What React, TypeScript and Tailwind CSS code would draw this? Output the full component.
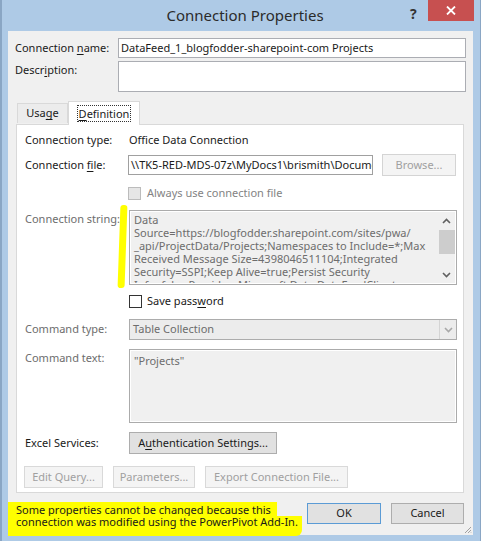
import React from 'react';

function U({ children }: { children: React.ReactNode }) {
  return <span className="underline underline-offset-[2px]">{children}</span>;
}

function Checkbox({ disabled }: { disabled?: boolean }) {
  return (
    <span
      className={
        disabled
          ? 'block w-[13px] h-[13px] border border-[#bcbcbc] bg-[#e6e6e6]'
          : 'block w-[13px] h-[13px] border border-[#333333] bg-white'
      }
    />
  );
}

function Chevron({ up, color = '#606060' }: { up?: boolean; color?: string }) {
  return (
    <svg width="9" height="6" viewBox="0 0 9 6">
      <path
        d={up ? 'M1 5 L4.5 1.5 L8 5' : 'M1 1 L4.5 4.5 L8 1'}
        fill="none"
        stroke={color}
        strokeWidth="1.6"
      />
    </svg>
  );
}

const connString = [
  'Data',
  'Source=https://blogfodder.sharepoint.com/sites/pwa/',
  '_api/ProjectData/Projects;Namespaces to Include=*;Max',
  'Received Message Size=4398046511104;Integrated',
  'Security=SSPI;Keep Alive=true;Persist Security',
  'Info=false;Provider=Microsoft.Data.DataFeedClient',
];

export default function App() {
  return (
    <div className="w-[481px] h-[544px] bg-white overflow-hidden font-['Noto_Sans',sans-serif] text-[11px] text-[#1a1a1a]">
      <div className="relative w-[481px] h-[541px] bg-[#aecae6] border-l-2 border-r border-[#8aa6c4] flex flex-col">
        {/* title bar */}
        <div className="relative h-[31px] flex items-center justify-center">
          <span className="text-[15px] text-[#2b2b2b] pl-[8px]">Connection Properties</span>
          <span className="absolute left-[408px] top-[3px] text-[14px] font-bold text-[#333]">?</span>
          <div className="absolute left-[426px] top-0 w-[46px] h-[21px] bg-[#c75050] flex items-center justify-center">
            <svg width="10" height="9" viewBox="0 0 10 9">
              <path d="M1 0.5 L9 8.5 M9 0.5 L1 8.5" stroke="#fff" strokeWidth="1.8" />
            </svg>
          </div>
        </div>

        {/* client area */}
        <div className="relative ml-[6px] w-[465px] h-[504px] bg-[#f0f0f0] flex flex-col">
          <div className="flex items-center mt-[7px] h-[20px]">
            <span className="w-[110px] pl-[7px] shrink-0">
              Connection <U>n</U>ame:
            </span>
            <div className="w-[348px] h-[20px] bg-white border border-[#abadb3] flex items-center px-[2px]">
              DataFeed_1_blogfodder-sharepoint-com Projects
            </div>
          </div>
          <div className="flex mt-[3px] h-[31px]">
            <span className="w-[110px] pl-[7px] shrink-0 pt-[1px]">
              Descr<U>i</U>ption:
            </span>
            <div className="w-[348px] h-[31px] bg-white border border-[#abadb3]" />
          </div>

          {/* tabs */}
          <div className="ml-[8px] mt-[9px] w-[448px] flex flex-col">
            <div className="flex items-end h-[23px] pl-[1px] relative z-10">
              <div className="w-[51px] h-[20px] border border-b-0 border-[#d9d9d9] bg-[#ececec] flex items-center justify-center mb-[1px]">
                Usa<U>g</U>e
              </div>
              <div className="w-[72px] h-[24px] border border-b-0 border-[#d9d9d9] bg-white flex items-start justify-center pt-[3px] -mb-[1px]">
                <span className="border border-dotted border-[#333] px-[1px] leading-[15px]">
                  <U>D</U>efinition
                </span>
              </div>
            </div>
            <div className="h-[369px] bg-white border border-[#d9d9d9] flex flex-col pl-[8px]">
              <div className="flex items-center mt-[5px] h-[20px]">
                <span className="w-[104px] shrink-0">Connection type:</span>
                <span>Office Data Connection</span>
              </div>
              <div className="flex items-center mt-[4px] h-[22px]">
                <span className="w-[103px] shrink-0">
                  Connection <U>f</U>ile:
                </span>
                <div className="w-[245px] h-[20px] bg-white border border-[#a0a0a0] flex items-center px-[2px] overflow-hidden whitespace-nowrap">
                  \\TK5-RED-MDS-07z\MyDocs1\brismith\Docume
                </div>
                <div className="ml-[9px] w-[74px] h-[22px] border border-[#d4d4d4] bg-[#f4f4f4] text-[#a0a0a0] flex items-center justify-center">
                  Browse...
                </div>
              </div>
              <div className="flex items-center mt-[11px] h-[13px] pl-[103px]">
                <Checkbox disabled />
                <span className="ml-[6px] text-[#838383]">Always use connection file</span>
              </div>
              <div className="flex mt-[10px] h-[75px]">
                <span className="w-[104px] shrink-0 text-[#6d6d6d] pt-[1px]">Connection string:</span>
                <div className="w-[328px] h-[75px] border border-[#ababab] bg-[#f0f0f0] flex p-[1px] shadow-[inset_0_0_0_1px_#ffffff]">
                  <div className="flex-1 overflow-hidden pl-[3px] pt-[1px] text-[#6d6d6d] leading-[13px] whitespace-nowrap">
                    {connString.map((l) => (
                      <div key={l}>{l}</div>
                    ))}
                  </div>
                  <div className="w-[17px] flex flex-col items-center bg-[#f0f0f0]">
                    <div className="h-[17px] flex items-center justify-center">
                      <Chevron up />
                    </div>
                    <div className="w-[16px] h-[24px] bg-[#cdcdcd] mt-[1px]" />
                    <div className="flex-1" />
                    <div className="h-[17px] flex items-center justify-center">
                      <Chevron />
                    </div>
                  </div>
                </div>
              </div>
              <div className="flex items-center mt-[10px] h-[13px] pl-[104px]">
                <Checkbox />
                <span className="ml-[5px]">
                  Save pass<U>w</U>ord
                </span>
              </div>
              <div className="flex items-center mt-[11px] h-[21px]">
                <span className="w-[104px] shrink-0 text-[#6d6d6d]">Command type:</span>
                <div className="w-[328px] h-[21px] border border-[#acacac] bg-[#ececec] flex items-center text-[#6d6d6d]">
                  <span className="flex-1 pl-[3px]">Table Collection</span>
                  <div className="w-[17px] h-[19px] border-l border-[#d4d4d4] flex items-center justify-center">
                    <Chevron color="#a8a8a8" />
                  </div>
                </div>
              </div>
              <div className="flex mt-[9px] h-[74px]">
                <span className="w-[104px] shrink-0 text-[#6d6d6d] pt-[1px]">Command text:</span>
                <div className="w-[328px] h-[74px] border border-[#ababab] bg-[#f0f0f0] shadow-[inset_0_0_0_1px_#ffffff] pl-[4px] pt-[3px] text-[#6d6d6d]">
                  "Projects"
                </div>
              </div>
              <div className="flex items-center mt-[9px] h-[22px]">
                <span className="w-[104px] shrink-0">Excel Services:</span>
                <div className="w-[148px] h-[22px] border border-[#adadad] bg-[#e1e1e1] flex items-center justify-center">
                  A<U>u</U>thentication Settings...
                </div>
              </div>
              <div className="flex items-center mt-[12px] h-[22px] gap-[10px] -ml-[1px] text-[#a0a0a0]">
                <div className="w-[79px] h-[22px] border border-[#d9d9d9] bg-[#f4f4f4] flex items-center justify-center">
                  Edit Query...
                </div>
                <div className="w-[82px] h-[22px] border border-[#d9d9d9] bg-[#f4f4f4] flex items-center justify-center">
                  Parameters...
                </div>
                <div className="w-[143px] h-[22px] border border-[#d9d9d9] bg-[#f4f4f4] flex items-center justify-center">
                  Export Connection File...
                </div>
              </div>
            </div>
          </div>

          {/* footer */}
          <div className="flex mt-[9px] h-[34px]">
            <div className="flex flex-col leading-[12px] w-[299px]">
              <span className="self-start bg-[#ffff00] pl-[8px] pr-[6px] pt-[2px]">
                Some properties cannot be changed because this
              </span>
              <span className="self-start bg-[#ffff00] pl-[8px] pr-[4px] pb-[8px] rounded-br-[6px]">
                connection was modified using the PowerPivot Add-In.
              </span>
            </div>
            <div className="flex gap-[10px] pt-[1px]">
              <div className="w-[74px] h-[21px] border border-[#5b9bd5] bg-[#e1e1e1] flex items-center justify-center">
                OK
              </div>
              <div className="w-[73px] h-[21px] border border-[#adadad] bg-[#e1e1e1] flex items-center justify-center">
                Cancel
              </div>
            </div>
          </div>

          {/* resize grip */}
          <svg className="absolute right-[1px] bottom-[1px]" width="8" height="8" viewBox="0 0 8 8">
            <path d="M7 1 L1 7 M7 4 L4 7 M7 6.5 L6.5 7" stroke="#a0a0a0" strokeWidth="1" />
          </svg>
        </div>

        {/* yellow marker stroke next to connection string */}
        <div className="absolute left-[117px] top-[205px] w-[7px] h-[83px] bg-[#ffff00] rounded-[3px] -skew-x-2" />
      </div>
    </div>
  );
}
